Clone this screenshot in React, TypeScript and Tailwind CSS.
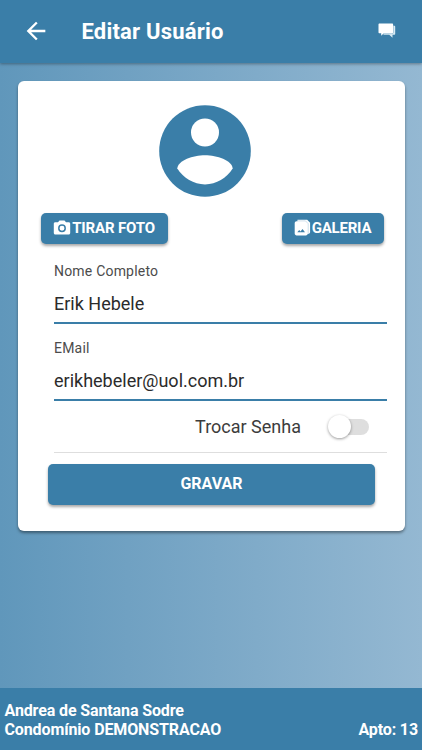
import React from "react";

function ArrowBack() {
  return (
    <svg viewBox="0 0 24 24" className="h-7 w-7 fill-white">
      <path d="M20 11H7.83l5.59-5.59L12 4l-8 8 8 8 1.41-1.41L7.83 13H20v-2z" />
    </svg>
  );
}

function ChatBubbles() {
  return (
    <svg viewBox="0 0 18 16" className="h-4 w-[18px]">
      <path d="M5.500 11.800h5.700l3.300 3v-3h1.700c.6 0 1-.4 1-1V3.700c0-.6-.4-1-1-1H14V10H5.500z" fill="#d9ebf4" />
      <path d="M1.500.5h12.600c.6 0 1 .4 1 1v7.700c0 .6-.4 1-1 1H5.800l-2.600 2.600v-2.600H1.500c-.6 0-1-.4-1-1V1.500c0-.6.4-1 1-1z" fill="#fff" />
      <path d="M5.600 10.700h8.500c.8 0 1.400-.5 1.400-1.300V3" fill="none" stroke="#7fabc6" strokeWidth=".5" />
    </svg>
  );
}

function Avatar() {
  return (
    <svg viewBox="0 0 92 92" className="h-[92px] w-[92px]">
      <circle cx="46" cy="46" r="45.8" fill="#3a7ea8" />
      <circle cx="46" cy="27.500" r="14" fill="#fff" />
      <path d="M18.300 63.500C19 55.500 34 50.300 46 50.300S73 55.500 73.700 63.500C67.500 73 57.500 79.400 46 79.400S24.500 73 18.300 63.500z" fill="#fff" />
    </svg>
  );
}

function CameraIcon() {
  return (
    <svg viewBox="0 0 18 16" className="h-4 w-[18px]">
      <path d="M2.300 2.300H5L6.500.6h5L13 2.300h2.700c.8 0 1.500.6 1.500 1.400v9.200c0 .8-.7 1.500-1.500 1.500H2.300c-.8 0-1.500-.7-1.500-1.500V3.700c0-.8.7-1.400 1.500-1.400z" fill="#fff" />
      <circle cx="9" cy="8.200" r="3.200" fill="none" stroke="#3a7ea8" strokeWidth="1.500" />
    </svg>
  );
}

function GalleryIcon() {
  return (
    <svg viewBox="0 0 17 18" className="h-[18px] w-[17px]">
      <path d="M3.500.8h9.700l2.900 2.900v9.300c0 1.100-.8 1.800-1.800 1.800H3.500z" fill="#fff" />
      <path d="M2.600 2.200h8.500l2.700 2.700v9.600c0 1.100-.8 1.900-1.900 1.900H2.600c-1.100 0-1.900-.8-1.900-1.900V4.100c0-1.100.8-1.900 1.900-1.900z" fill="#fff" />
      <path d="M3.500 1.900h8l2.700 2.800v9.500" fill="none" stroke="#9fc1d6" strokeWidth=".5" />
      <path d="M3.300 13.300l1.900-2.300 1.300 1.400 2-2.400 2.500 3.300z" fill="#3a7ea8" />
    </svg>
  );
}

const raised = "bg-[#3a7ea8] font-bold text-white shadow-[0_2px_3px_rgba(0,0,0,0.35)]";

function Field({ label, value }: { label: string; value: string }) {
  return (
    <label className="flex h-[77px] flex-col border-b-2 border-[#3a7ea8]">
      <span className="mt-[14px] h-5 text-[14px] leading-5 tracking-[0.2px] text-[#4c4c4c]">{label}</span>
      <span className="mt-[11px] h-6 text-[18px] leading-6 text-[#2b2b2b]">{value}</span>
    </label>
  );
}

export default function App() {
  return (
    <div className="flex h-[750px] w-[422px] flex-col overflow-hidden bg-linear-to-r from-[#6097bb] to-[#94b8d2] font-[Roboto,sans-serif]">
      <header className="flex h-[62.5px] shrink-0 items-center bg-[#3a7ea8] pl-[22px] pr-[26px] shadow-[0_1px_3px_rgba(0,0,0,0.35)]">
        <button aria-label="Voltar"><ArrowBack /></button>
        <h1 className="ml-[31.500px] flex-1 pt-px text-[22px] font-bold leading-7 tracking-[0.2px] text-white">Editar Usuário</h1>
        <button aria-label="Mensagens"><ChatBubbles /></button>
      </header>
      <main className="flex-1 pl-[18px] pr-[17px] pt-[18px]">
        <section className="flex h-[450px] flex-col rounded-[6px] bg-white shadow-[0_2px_3px_rgba(0,0,0,0.4)]">
          <div className="flex justify-center pr-[14px] pt-6"><Avatar /></div>
          <div className="mt-4 flex justify-between pl-[23px] pr-[21px]">
            <button className={`flex h-[31px] w-[127px] items-center justify-center rounded-[5px] pr-px text-[15px] tracking-[-0.15px] ${raised}`}>
              <CameraIcon /><span className="ml-px">TIRAR FOTO</span>
            </button>
            <button className={`flex h-[31px] w-[102px] items-center justify-center rounded-[5px] pr-px text-[15px] tracking-[-0.2px] ${raised}`}>
              <GalleryIcon /><span className="ml-px">GALERIA</span>
            </button>
          </div>
          <div className="ml-9 mr-[18px]">
            <div className="mt-[3.500px]"><Field label="Nome Completo" value="Erik Hebele" /></div>
            <Field label="EMail" value="erikhebeler@uol.com.br" />
            <div className="flex h-[52px] items-center justify-end border-b border-[#dedede] pr-[18px]">
              <span className="mr-[27px] text-[18px] text-[#3c3c3c]">Trocar Senha</span>
              <span role="switch" aria-checked="false" className="flex h-4 w-[41px] items-center rounded-full bg-linear-to-r from-transparent from-20% to-[#dedede] to-20%">
                <span className="h-[23px] w-[23px] rounded-full bg-white shadow-[0_1px_3px_rgba(0,0,0,0.4)]" />
              </span>
            </div>
          </div>
          <button className={`ml-[30px] mt-[11px] h-[41px] w-[327px] rounded-[5px] pb-[2px] text-[16px] ${raised}`}>GRAVAR</button>
        </section>
      </main>
      <footer className="flex h-[62px] shrink-0 items-end justify-between bg-[#3a7ea8] pb-[11px] pl-[4.500px] pr-1 text-[16px] font-bold leading-[19px] tracking-[-0.12px] text-white">
        <div><p>Andrea de Santana Sodre</p><p>Condomínio DEMONSTRACAO</p></div>
        <p>Apto: 13</p>
      </footer>
    </div>
  );
}
